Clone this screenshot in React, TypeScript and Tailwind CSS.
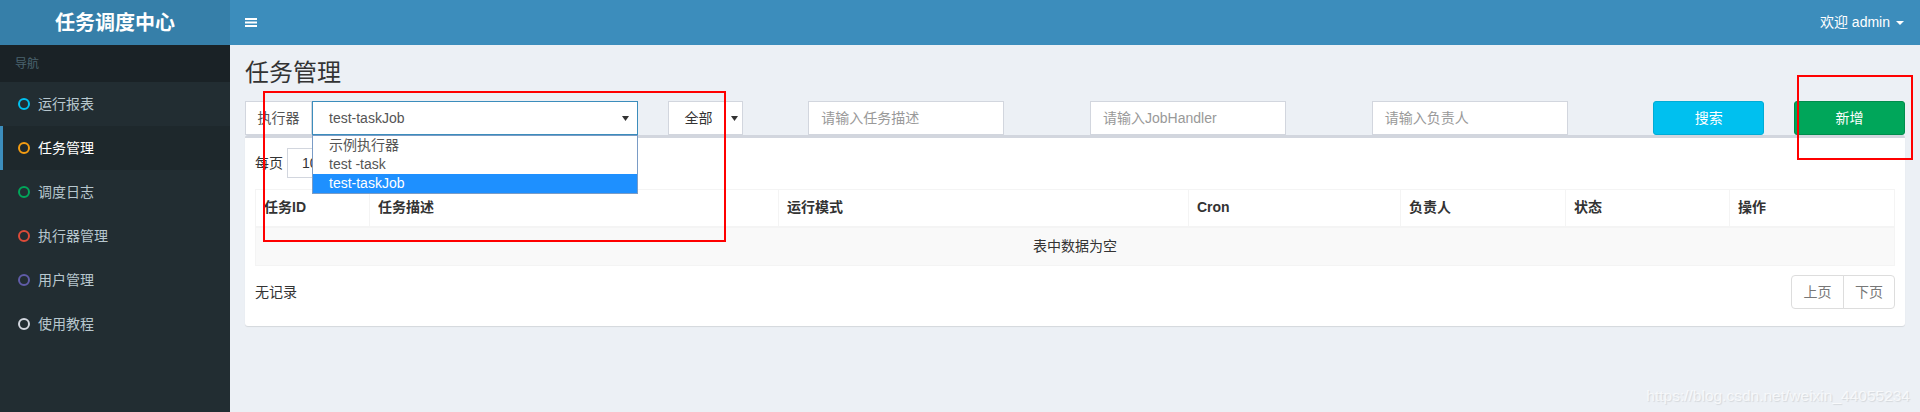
import React from 'react'

const menu = [
  { name: '运行报表', ring: 'border-[#00c0ef]' },
  { name: '任务管理', ring: 'border-[#f39c12]', active: true },
  { name: '调度日志', ring: 'border-[#00a65a]' },
  { name: '执行器管理', ring: 'border-[#dd4b39]' },
  { name: '用户管理', ring: 'border-[#605ca8]' },
  { name: '使用教程', ring: 'border-[#d2d6de]' },
]

const columns = [
  { title: '任务ID', w: 'w-[114px]' },
  { title: '任务描述', w: 'w-[409px]' },
  { title: '运行模式', w: 'w-[410px]' },
  { title: 'Cron', w: 'w-[212px]' },
  { title: '负责人', w: 'w-[165px]' },
  { title: '状态', w: 'w-[164px]' },
  { title: '操作', w: 'w-[165px]' },
]

const executors = ['示例执行器', 'test -task', 'test-taskJob']

function Arrow() {
  return (
    <svg width="7" height="5" viewBox="0 0 7 5" className="shrink-0">
      <path d="M0 0h7L3.5 5z" fill="#333" />
    </svg>
  )
}

export default function App() {
  return (
    <div className="relative w-[1920px] h-[412px] overflow-hidden flex flex-col font-['Liberation_Sans','Noto_Sans_CJK_SC',sans-serif] text-[14px] text-[#333]">
      {/* header */}
      <header className="flex h-[45px] shrink-0">
        <div className="w-[230px] bg-[#367fa9] flex items-center justify-center text-white text-[20px] font-bold">
          任务调度中心
        </div>
        <nav className="flex-1 bg-[#3c8dbc] flex items-center justify-between pl-[15px] pr-[16px]">
          <svg width="12" height="9" viewBox="0 0 12 9">
            <rect x="0" y="0" width="12" height="2" fill="#fff" />
            <rect x="0" y="3.5" width="12" height="2" fill="#fff" />
            <rect x="0" y="7" width="12" height="2" fill="#fff" />
          </svg>
          <div className="flex items-center text-white text-[14px]">
            欢迎 admin
            <span className="ml-[6px] w-0 h-0 border-t-[4px] border-t-white border-x-[4px] border-x-transparent" />
          </div>
        </nav>
      </header>

      <div className="flex flex-1">
        {/* sidebar */}
        <aside className="w-[230px] bg-[#222d32]">
          <div className="h-[37px] bg-[#1a2226] text-[#4b646f] text-[12px] flex items-center pl-[15px]">导航</div>
          {menu.map((m) => (
            <div
              key={m.name}
              className={
                m.active
                  ? 'h-[44px] flex items-center bg-[#1e282c] border-l-[3px] border-[#3c8dbc] pl-[15px] text-white'
                  : 'h-[44px] flex items-center pl-[18px] text-[#b8c7ce]'
              }
            >
              <span className={`w-[12px] h-[12px] rounded-full border-[2px] ${m.ring}`} />
              <span className="ml-[8px] text-[14px]">{m.name}</span>
            </div>
          ))}
        </aside>

        {/* content */}
        <main className="flex-1 bg-[#ecf0f5] px-[15px] pt-[15px]">
          <h1 className="text-[24px] leading-[26px] text-[#333] font-normal">任务管理</h1>

          <div className="grid grid-cols-12 -mx-[15px] mt-[15px] h-[34px]">
            <div className="col-span-3 px-[15px] flex">
              <div className="w-[67px] h-[34px] bg-white border border-[#d2d6de] flex items-center justify-center text-[#555]">
                执行器
              </div>
              <div className="relative flex-1 z-10">
                <div className="h-[34px] bg-white border border-[#3c8dbc] flex items-center justify-between pl-[16px] pr-[8px] text-[#555]">
                  test-taskJob
                  <Arrow />
                </div>
                <ul className="absolute top-[34px] left-0 right-0 bg-white border border-[#7a9cc6]">
                  {executors.map((e, i) => (
                    <li
                      key={e}
                      className={
                        i === 2
                          ? 'h-[19px] leading-[19px] pl-[16px] bg-[#1e90ff] text-white'
                          : 'h-[19px] leading-[19px] pl-[16px] text-[#555]'
                      }
                    >
                      {e}
                    </li>
                  ))}
                </ul>
              </div>
            </div>
            <div className="col-span-1 px-[15px]">
              <div className="w-[75px] h-[34px] bg-white border border-[#d2d6de] flex items-center justify-between pl-[16px] pr-[4px]">
                全部
                <Arrow />
              </div>
            </div>
            {['请输入任务描述', '请输入JobHandler', '请输入负责人'].map((p) => (
              <div key={p} className="col-span-2 px-[15px]">
                <div className="w-[196px] h-[34px] bg-white border border-[#d2d6de] flex items-center px-[12px] text-[#999]">
                  {p}
                </div>
              </div>
            ))}
            <div className="col-span-1 px-[15px]">
              <button className="w-full h-[34px] bg-[#00c0ef] border border-[#00acd6] rounded-[3px] text-white">搜索</button>
            </div>
            <div className="col-span-1 px-[15px]">
              <button className="w-full h-[34px] bg-[#00a65a] border border-[#008d4c] rounded-[3px] text-white">新增</button>
            </div>
          </div>

          {/* box */}
          <div className="bg-white border-t-[3px] border-[#d2d6de] rounded-[3px] shadow-[0_1px_1px_rgba(0,0,0,0.1)] px-[10px] pt-[10px] pb-[17px]">
            <div className="flex items-center h-[30px]">
              <span>每页</span>
              <div className="ml-[4px] w-[75px] h-[30px] border border-[#d2d6de] flex items-center pl-[14px]">10</div>
              <span className="ml-[4px]">条记录</span>
            </div>

            <table className="mt-[11px] w-full table-fixed border-collapse border border-[#f4f4f4]">
              <colgroup>
                {columns.map((c) => (
                  <col key={c.title} className={c.w} />
                ))}
              </colgroup>
              <thead>
                <tr>
                  {columns.map((c) => (
                    <th key={c.title} className="h-[37px] px-[8px] text-left font-bold border border-[#f4f4f4] border-b-2">
                      {c.title}
                    </th>
                  ))}
                </tr>
              </thead>
              <tbody>
                <tr className="bg-[#f9f9f9]">
                  <td colSpan={7} className="h-[39px] text-center">表中数据为空</td>
                </tr>
              </tbody>
            </table>

            <div className="mt-[9px] flex justify-between items-start">
              <div className="pt-[7px] leading-[20px]">无记录</div>
              <div className="flex h-[34px] text-[#777]">
                <div className="w-[53px] border border-[#ddd] rounded-l-[4px] flex items-center justify-center">上页</div>
                <div className="w-[52px] -ml-px border border-[#ddd] rounded-r-[4px] flex items-center justify-center">下页</div>
              </div>
            </div>
          </div>
        </main>
      </div>

      {/* annotations drawn over the screenshot */}
      <div className="absolute left-[263px] top-[91px] w-[463px] h-[151px] border-2 border-[#ff0000] pointer-events-none z-20" />
      <div className="absolute left-[1797px] top-[75px] w-[116px] h-[85px] border-2 border-[#ff0000] pointer-events-none z-20" />

      <div className="absolute right-[10px] top-[384px] text-[15.5px] text-white/70 [text-shadow:1px_1px_1px_rgba(0,0,0,0.1)]">
        https://blog.csdn.net/weixin_44055234
      </div>
    </div>
  )
}
